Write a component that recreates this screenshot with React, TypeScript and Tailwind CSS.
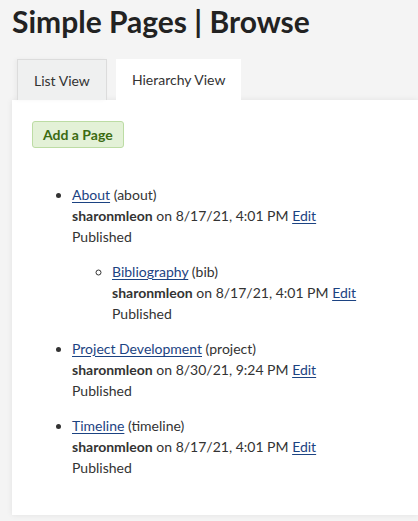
const pages = [
  {
    title: 'About',
    slug: 'about',
    date: '8/17/21, 4:01 PM',
    children: [{ title: 'Bibliography', slug: 'bib', date: '8/17/21, 4:01 PM', children: [] }],
  },
  { title: 'Project Development', slug: 'project', date: '8/30/21, 9:24 PM', children: [] },
  { title: 'Timeline', slug: 'timeline', date: '8/17/21, 4:01 PM', children: [] },
];

type Page = { title: string; slug: string; date: string; children: Page[] };

function PageItem({ page }: { page: Page }) {
  return (
    <li className="mb-[14px]">
      <a href="#" className="text-[#1c4382] underline underline-offset-2">
        {page.title}
      </a>{' '}
      ({page.slug})
      <br />
      <span className="font-bold">sharonmleon</span> on {page.date}{' '}
      <a href="#" className="text-[#1c4382] underline underline-offset-2">
        Edit
      </a>
      <br />
      Published
      {page.children.length > 0 && (
        <ul className="mt-[14px] pl-10 list-[circle]">
          {page.children.map((c) => (
            <PageItem key={c.slug} page={c} />
          ))}
        </ul>
      )}
    </li>
  );
}

export default function App() {
  return (
    <div className="min-h-[521px] w-[418px] overflow-hidden bg-[#f4f4f4] pl-3 text-[#333] font-['Lato',sans-serif]">
      <h1 className="mt-[3px] text-[30px] leading-[36px] font-bold text-[#222]">Simple Pages | Browse</h1>

      {/* tabs */}
      <div className="mt-5 flex items-end gap-[9px] pl-[5px] text-[14px]">
        <div className="flex h-[41px] items-center border border-b-0 border-[#dcdcdc] bg-[#eff0f0] px-[16px] shadow-[-2px_0_4px_rgba(0,0,0,0.04)]">
          List View
        </div>
        <div className="flex h-[41px] items-center bg-white px-[16px]">Hierarchy View</div>
      </div>

      <div className="bg-white pt-[21px] pb-[23px] pl-5 shadow-[0_0_6px_rgba(0,0,0,0.08)]">
        <button className="h-[27px] rounded-[3px] border border-[#bcdca4] bg-[#e3f1d7] px-[10px] text-[14px] font-bold text-[#3b6b12]">
          Add a Page
        </button>
        <ul className="mt-[36px] list-disc pl-10 text-[14px] leading-[21px]">
          {pages.map((p) => (
            <PageItem key={p.slug} page={p} />
          ))}
        </ul>
      </div>
    </div>
  );
}
